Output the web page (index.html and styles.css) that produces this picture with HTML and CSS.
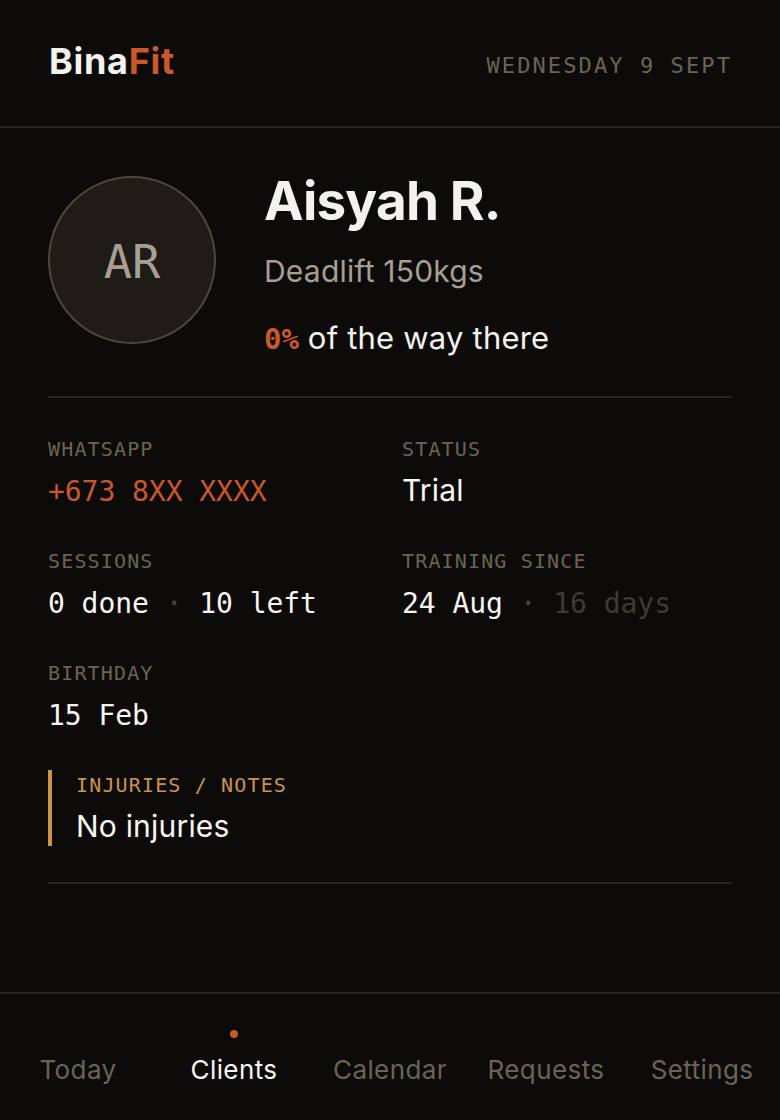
FILE: index.html
```html
<!DOCTYPE html>
<html lang="en">
<head>
<meta charset="utf-8">
<title>BinaFit</title>
<link rel="stylesheet" href="styles.css">
</head>
<body>
<div class="app">
  <header class="topbar">
    <div class="logo">Bina<span class="accent">Fit</span></div>
    <div class="date">WEDNESDAY 9 SEPT</div>
  </header>
  <main class="content">
    <section class="profile">
      <div class="avatar">AR</div>
      <div class="who">
        <h1 class="name">Aisyah R.</h1>
        <div class="goal">Deadlift 150kgs</div>
        <div class="progress"><span class="pct">0%</span> of the way there</div>
      </div>
    </section>
    <section class="details">
      <div class="facts">
        <div class="fact">
          <div class="label">WHATSAPP</div>
          <div class="value mono accent">+673 8XX XXXX</div>
        </div>
        <div class="fact">
          <div class="label">STATUS</div>
          <div class="value sans">Trial</div>
        </div>
        <div class="fact">
          <div class="label">SESSIONS</div>
          <div class="value mono">0 done <span class="sep">·</span> 10 left</div>
        </div>
        <div class="fact">
          <div class="label">TRAINING SINCE</div>
          <div class="value mono">24 Aug <span class="sep">·</span> <span class="dim">16 days</span></div>
        </div>
        <div class="fact">
          <div class="label">BIRTHDAY</div>
          <div class="value mono">15 Feb</div>
        </div>
      </div>
      <div class="notes">
        <div class="label gold">INJURIES / NOTES</div>
        <div class="value sans">No injuries</div>
      </div>
    </section>
  </main>
  <nav class="tabs">
    <div class="tab">Today</div>
    <div class="tab active">Clients</div>
    <div class="tab">Calendar</div>
    <div class="tab">Requests</div>
    <div class="tab">Settings</div>
  </nav>
</div>
</body>
</html>
```

FILE: styles.css
```css
* { box-sizing: border-box; margin: 0; padding: 0; }
html, body { height: 100%; }
body {
  background: #0c0b0a;
  color: #f4f2ec;
  font-family: "Inter", "Noto Sans", sans-serif;
}
.app {
  height: 1120px;
  display: flex;
  flex-direction: column;
}
.accent { color: #c9582c; }
.topbar {
  height: 128px;
  padding: 0 48px;
  border-bottom: 2px solid #242321;
  display: flex;
  justify-content: space-between;
  align-items: center;
}
.logo {
  font-size: 36px;
  font-weight: 700;
  letter-spacing: 0.7px;
  line-height: 40px;
  margin-top: -5px;
  margin-left: 1px;
}
.date {
  font-family: "DejaVu Sans Mono", monospace;
  font-size: 22px;
  letter-spacing: 2.1px;
  margin-top: 4px;
  color: #6b6357;
}
.content {
  flex: 1;
  padding: 0 48px;
}
.profile {
  display: flex;
  gap: 48px;
  padding: 48px 0 39px;
  border-bottom: 2px solid #242321;
}
.avatar {
  width: 168px;
  height: 168px;
  flex: none;
  border-radius: 50%;
  background: #1f1b16;
  border: 2px solid #4c463e;
  padding-top: 2px;
  color: #a79f92;
  font-family: "DejaVu Sans Mono", monospace;
  font-size: 47px;
  display: flex;
  align-items: center;
  justify-content: center;
}
.who { margin-top: -1px; }
.name {
  font-size: 53px;
  font-weight: 700;
  line-height: 52px;
  letter-spacing: -0.8px;
}
.goal {
  margin-top: 26px;
  font-size: 30px;
  line-height: 36px;
  letter-spacing: 0.2px;
  color: #a79f92;
}
.progress {
  margin-top: 31px;
  font-size: 31px;
  line-height: 36px;
  letter-spacing: 0.2px;
}
.pct {
  color: #c9582c;
  font-weight: 700;
  font-size: 29px;
  letter-spacing: 0;
  font-family: "DejaVu Sans Mono", monospace;
}
.details {
  padding: 39px 0 36px;
  border-bottom: 2px solid #242321;
}
.facts {
  display: grid;
  grid-template-columns: 330px 330px;
  column-gap: 24px;
  row-gap: 32px;
}
.fact { min-height: 80px; }
.label {
  font-family: "DejaVu Sans Mono", monospace;
  font-size: 20px;
  letter-spacing: 1.15px;
  line-height: 24px;
  color: #6b6357;
}
.label.gold { color: #c8954a; }
.value {
  margin-top: 11px;
  font-size: 30px;
  line-height: 36px;
  letter-spacing: 0.2px;
  color: #f8f6f0;
}
.value.mono {
  margin-top: 13px;
  font-family: "DejaVu Sans Mono", monospace;
  font-size: 28px;
  letter-spacing: -0.05px;
}
.value.accent { color: #c9582c; }
.sep { color: #4c463e; }
.dim { color: #3f3a33; }
.notes {
  margin-top: 29px;
  padding: 3px 0 2px 24px;
  border-left: 4px solid #c8954a;
}
.tabs {
  flex: none;
  height: 128px;
  border-top: 2px solid #242321;
  display: grid;
  grid-template-columns: repeat(5, 1fr);
}
.tab {
  position: relative;
  padding-top: 60px;
  text-align: center;
  font-size: 26px;
  line-height: 32px;
  letter-spacing: 0.4px;
  color: #6b6357;
}
.tab.active { color: #f8f6f0; }
.tab.active::before {
  content: "";
  position: absolute;
  top: 36px;
  left: 50%;
  width: 8px;
  height: 8px;
  margin-left: -4px;
  border-radius: 50%;
  background: #c9582c;
}
```
